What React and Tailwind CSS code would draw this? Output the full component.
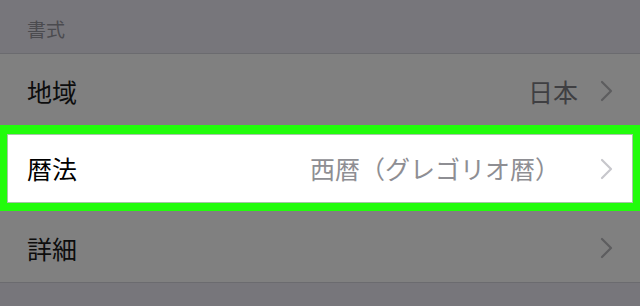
const Chevron = ({ className = "" }) => (
  <svg width="13" height="22" viewBox="0 0 13 22" fill="none" className={className}>
    <path d="M2 2 L11 11 L2 20" stroke="currentColor" strokeWidth="2.2" strokeLinecap="round" strokeLinejoin="round" />
  </svg>
);

function Row({ label, value, selected = false }) {
  return (
    <div
      className={`flex items-center justify-between ${
        selected
          ? "h-[86px] bg-white border-[#22fc0c] border-t-[9px] border-b-[8px] border-x-[7px] pl-[20px] pr-[20px] shadow-[inset_0_0_0_1px_rgba(0,90,0,0.35)]"
          : "h-[71px] bg-[#808080] pl-[27px] pr-[27px] pt-[3px]"
      }`}
    >
      <span className={`text-[25px] leading-none ${selected ? "text-black" : "text-[#0d0d0d]"}`}>
        {label}
      </span>
      <div className={`flex items-center ${selected ? "gap-[40px]" : "gap-[22px]"}`}>
        {value && (
          <span className={`text-[25px] leading-none ${selected ? "text-[#8e8e93]" : "text-[#3f3f42]"}`}>
            {value}
          </span>
        )}
        <Chevron className={selected ? "text-[#c7c7cc]" : "text-[#5d5d5f]"} />
      </div>
    </div>
  );
}

export default function App() {
  return (
    <div className="w-[640px] h-[306px] overflow-hidden bg-[#77767b] font-['Noto_Sans_CJK_JP','Noto_Sans',sans-serif]">
      <div className="h-[54px] flex items-center pl-[27px] pt-[6px] border-b border-[#6b6b6f] text-[19px] text-[#4b4b4f]">
        書式
      </div>
      <Row label="地域" value="日本" />
      <Row label="暦法" value="西暦（グレゴリオ暦）" selected />
      <div className="border-b border-[#6b6b6f]">
        <Row label="詳細" />
      </div>
    </div>
  );
}
